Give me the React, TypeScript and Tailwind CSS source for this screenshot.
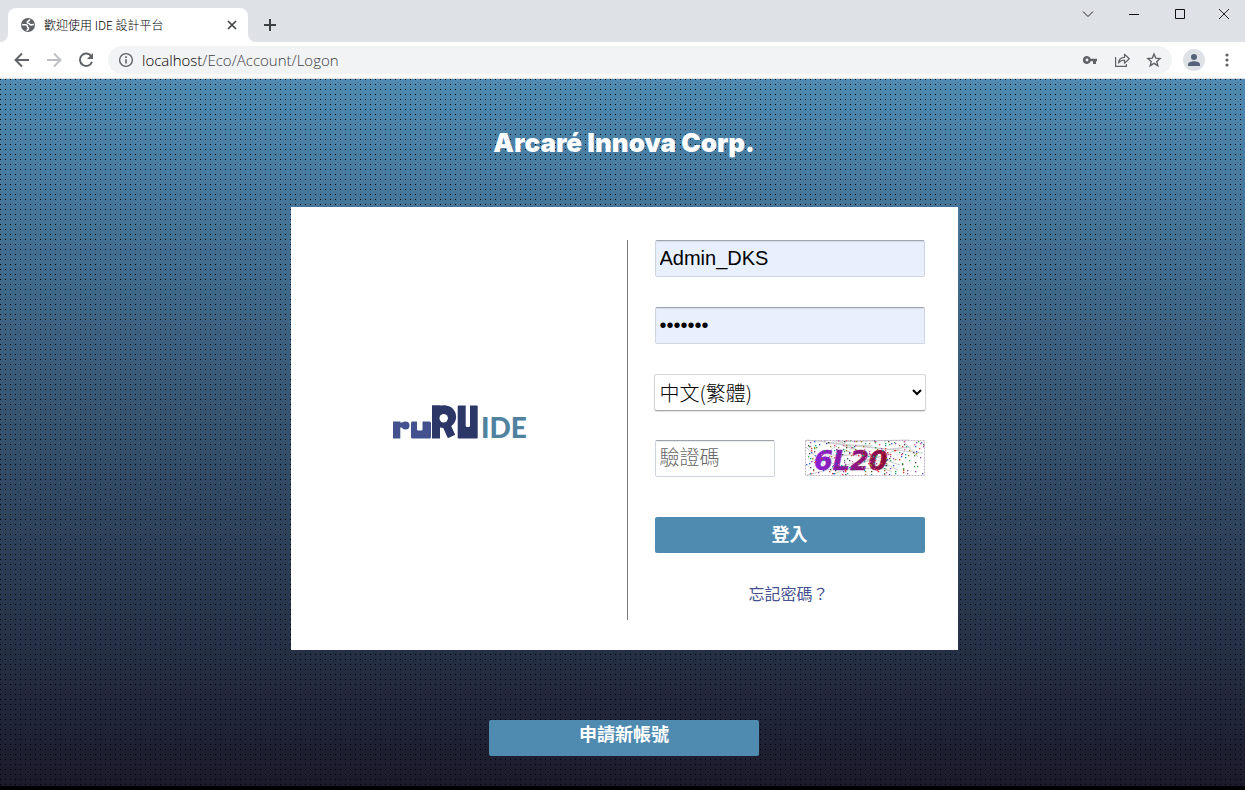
import React from "react";

const FONT = 'font-["Liberation_Sans","Noto_Sans_CJK_TC",sans-serif]';

function IconButton({ label, children, className = "" }: { label: string; children: React.ReactNode; className?: string }) {
  return (
    <button type="button" aria-label={label} className={`flex items-center justify-center ${className}`}>
      {children}
    </button>
  );
}

function TitleBar() {
  return (
    <div className="flex h-[42px] items-end bg-[#dee1e6]">
      <div className="h-2 w-2 bg-white">
        <div className="h-2 w-2 rounded-br-lg bg-[#dee1e6]" />
      </div>
      <div className="flex h-[34px] w-60 items-center rounded-t-lg bg-white pr-2 pl-3">
        <svg width="16" height="16" viewBox="0 0 16 16" aria-hidden="true">
          <circle cx="8" cy="8" r="7" fill="#5f6368" />
          <path d="M9.800 2.400C9.600 4 8.200 3.900 7.400 4.700c-.6.8.3 1.500 1.100 1.600 1.200.1 1 1.500 2.200 1.600 1 .1 1.500-.6 3.300-.3" fill="none" stroke="#fff" strokeWidth="1.600" />
          <path d="M2 7.800h3.600c1.600 0 1.900 1 1.800 1.900-.1.900 1.200.6 1.100 1.700-.1 1-1.300.9-1.500 2.500" fill="none" stroke="#fff" strokeWidth="1.600" />
        </svg>
        <span className='ml-2 flex-1 font-["Noto_Sans_CJK_TC",sans-serif] text-xs font-light text-black'>歡迎使用 IDE 設計平台</span>
        <IconButton label="關閉分頁" className="h-4 w-4">
          <svg width="10" height="10" viewBox="0 0 10 10" stroke="#3c4043" strokeWidth="1.600"><path d="M1 1l8 8M9 1l-8 8" /></svg>
        </IconButton>
      </div>
      <div className="h-2 w-2 bg-white">
        <div className="h-2 w-2 rounded-bl-lg bg-[#dee1e6]" />
      </div>
      <IconButton label="新分頁" className="h-[34px] w-7">
        <svg width="12" height="12" viewBox="0 0 12 12" stroke="#3c4043" strokeWidth="2"><path d="M6 0v12M0 6h12" /></svg>
      </IconButton>
      <div className="ml-auto flex h-full items-start">
        <IconButton label="搜尋分頁" className="h-7 w-[46px]">
          <svg width="12" height="8" viewBox="0 0 12 8" fill="none" stroke="#222"><path d="M1 1.500l5 5 5-5" /></svg>
        </IconButton>
        <IconButton label="最小化" className="h-7 w-[46px]">
          <svg width="10" height="10" viewBox="0 0 10 10" stroke="#111"><path d="M0 5.500h10" /></svg>
        </IconButton>
        <IconButton label="最大化" className="h-7 w-[46px]">
          <svg width="10" height="10" viewBox="0 0 10 10" fill="none" stroke="#111"><path d="M.5.5h9v9h-9z" /></svg>
        </IconButton>
        <IconButton label="關閉" className="h-7 w-[42px]">
          <svg width="10" height="10" viewBox="0 0 10 10" stroke="#222"><path d="M0 0l10 10M10 0L0 10" /></svg>
        </IconButton>
      </div>
    </div>
  );
}

function Toolbar() {
  return (
    <div className="flex h-[37px] items-center border-b border-[#dadce0] bg-white pr-[6px] pl-2">
      <IconButton label="上一頁" className="h-7 w-7">
        <svg width="16" height="16" viewBox="0 0 16 16" fill="none" stroke="#5f6368" strokeWidth="1.900"><path d="M15 8H2M8 1.500L1.500 8 8 14.500" /></svg>
      </IconButton>
      <IconButton label="下一頁" className="ml-1 h-7 w-7">
        <svg width="16" height="16" viewBox="0 0 16 16" fill="none" stroke="#bcbec1" strokeWidth="1.900"><path d="M1 8h13M8 1.500L14.500 8 8 14.500" /></svg>
      </IconButton>
      <IconButton label="重新載入" className="ml-1 h-7 w-7">
        <svg width="16" height="16" viewBox="0 0 16 16"><path d="M13.400 4.500A6.200 6.200 0 1 0 14 9.700" fill="none" stroke="#5f6368" strokeWidth="2" /><path d="M15 1v6H9z" fill="#5f6368" /></svg>
      </IconButton>
      <div className="ml-2 flex h-7 flex-1 items-center rounded-full bg-[#f1f3f4] pr-[10px] pl-[10px]">
        <svg width="16" height="16" viewBox="0 0 16 16" aria-hidden="true"><circle cx="8" cy="8" r="6.400" fill="none" stroke="#5f6368" strokeWidth="1.400" /><path d="M7.200 7.200h1.600v4.300H7.200zM7.200 4.300h1.600v1.600H7.200z" fill="#5f6368" /></svg>
        <span className='ml-2 flex-1 font-["Open_Sans",sans-serif] text-[15px] leading-5 font-light text-[#3c4043]'><span className="text-black">localhost</span>/Eco/Account/Logon</span>
        <IconButton label="密碼" className="h-4 w-4">
          <svg width="16" height="16" viewBox="0 0 16 16"><path fillRule="evenodd" d="M5 4a4 4 0 1 0 3.700 5.300H11V12h3V9.300h1V6.700H8.700A4 4 0 0 0 5 4zm0 2.600a1.400 1.400 0 1 1 0 2.800 1.400 1.400 0 0 1 0-2.800z" fill="#5f6368" /></svg>
        </IconButton>
        <IconButton label="分享" className="ml-4 h-4 w-4">
          <svg width="16" height="16" viewBox="0 0 16 16" fill="none" stroke="#5f6368" strokeWidth="1.200"><path d="M1.600 5v9.400h10.800V12" /><path d="M4.500 11c.4-3.700 2.500-5.500 6-5.600V2.300L15.300 6.800l-4.800 4.400V8C7.800 8 6 9 4.500 11z" strokeLinejoin="round" /></svg>
        </IconButton>
        <IconButton label="加入書籤" className="ml-4 h-4 w-4">
          <svg width="16" height="16" viewBox="0 0 16 16" fill="none" stroke="#5f6368" strokeWidth="1.400"><path d="M8 2l1.700 4.100 4.400.4-3.300 2.900 1 4.300L8 11.400l-3.800 2.300 1-4.300L1.900 6.500l4.400-.4z" /></svg>
        </IconButton>
      </div>
      <IconButton label="使用者" className="ml-[11px] h-[22px] w-[22px] rounded-full bg-[#dee1e6]">
        <svg width="12" height="12" viewBox="0 0 12 12" fill="#56617a"><circle cx="6" cy="3" r="3" /><path d="M0 12v-1.500C0 8.200 3.500 7.300 6 7.300s6 .9 6 3.200V12z" /></svg>
      </IconButton>
      <IconButton label="選單" className="ml-[10px] h-7 w-6">
        <svg width="4" height="14" viewBox="0 0 4 14" fill="#5f6368"><circle cx="2" cy="2" r="1.600" /><circle cx="2" cy="7" r="1.600" /><circle cx="2" cy="12" r="1.600" /></svg>
      </IconButton>
    </div>
  );
}

function Logo() {
  return (
    <svg width="140" height="44" viewBox="0 -4 140 44" role="img" aria-label="ruRU IDE" className="overflow-visible">
      <g fill="#43528f">
        <rect x="0" y="17.500" width="7.300" height="17" />
        <rect x="6" y="18.500" width="6" height="5" />
        <circle cx="12.500" cy="21.500" r="4" />
        <rect x="18" y="17.500" width="20" height="17" rx="1.500" />
      </g>
      <rect x="24" y="15" width="5.500" height="11.500" rx="1" fill="#fff" />
      <g fill="#2d3767">
        <rect x="39" y="1.500" width="14" height="22" />
        <rect x="39" y="1.500" width="8" height="33" />
        <circle cx="51.800" cy="12.800" r="11.300" />
        <rect x="64.700" y="1.500" width="20" height="33" rx="1" />
      </g>
      <line x1="52" y1="18" x2="58.500" y2="32.500" stroke="#2d3767" strokeWidth="8" />
      <circle cx="50.700" cy="14.300" r="4.200" fill="#fff" />
      <rect x="72.700" y="0" width="4.300" height="23" rx="1.500" fill="#fff" />
      <text x="88" y="34" fill="#4f829f" className='font-["Lato",sans-serif] text-[28px] font-black'>IDE</text>
    </svg>
  );
}

const NOISE_COLORS = ["#e23b3b", "#2ca84a", "#3454d1", "#8b3fb5", "#444444", "#d94fa0", "#1aa5a5", "#a08020"];

function Captcha() {
  let seed = 4711;
  const next = (max: number) => {
    seed = (seed * 9301 + 49297) % 233280;
    return Math.floor((seed / 233280) * max);
  };
  const dots = Array.from({ length: 240 }, () => ({ x: next(119), y: next(35), c: NOISE_COLORS[next(8)] }));
  const lines = Array.from({ length: 17 }, () => [next(120), next(36), next(120), next(36)]);
  return (
    <svg width="120" height="36" viewBox="0 0 120 36" role="img" aria-label="驗證碼圖片 6L20" className="shrink-0 overflow-visible">
      <defs>
        <linearGradient id="ink" x1="0" x2="1">
          <stop offset="0" stopColor="#8a22d8" />
          <stop offset="0.5" stopColor="#8c178f" />
          <stop offset="1" stopColor="#8c0a30" />
        </linearGradient>
      </defs>
      <rect width="120" height="36" fill="#fff" />
      {lines.map((l, i) => (
        <line key={i} x1={l[0]} y1={l[1]} x2={l[2]} y2={l[3]} stroke="#cccccc" />
      ))}
      <text x="9" y="30" fill="url(#ink)" stroke="url(#ink)" strokeWidth="0.6" className='font-["DejaVu_Sans",sans-serif] text-[27px] leading-8 font-bold italic'>6L20</text>
      {dots.map((d, i) => (
        <rect key={i} x={d.x} y={d.y} width="1.300" height="1.300" fill={d.c} />
      ))}
      <rect x="0.5" y="0.5" width="119" height="35" fill="none" stroke="#c0b4c4" strokeDasharray="2 1" />
    </svg>
  );
}

const FIELD =
  "h-[37px] min-w-0 rounded-xs border border-[#d0d5de] border-t-[#9fa3ac] px-1 text-xl leading-6 text-black shadow-[inset_0_1px_1px_rgba(0,0,0,0.08)] outline-none";

const ACTION = "h-9 w-[270px] rounded-xs bg-[#4f8bb1] text-lg leading-6 font-bold text-white";

function LoginForm() {
  return (
    <form className="ml-[27px] flex min-w-0 flex-1 flex-col" onSubmit={(e) => e.preventDefault()}>
      <input aria-label="帳號" defaultValue="Admin_DKS" className={`${FIELD} bg-[#e8f0fe]`} />
      <input aria-label="密碼" type="password" defaultValue="ruruide" className={`${FIELD} mt-[30px] bg-[#e8f0fe]`} />
      <select
        aria-label="語言"
        className='mt-[30px] -mx-px h-[37px] rounded-[3px] border border-[#d6d6d6] border-b-[#a8a8a8] bg-white px-px font-["Noto_Sans_CJK_TC",sans-serif] text-xl font-light text-black shadow-[0_1px_1px_rgba(0,0,0,0.12)]'
      >
        <option>中文(繁體)</option>
      </select>
      <div className="mt-[29px] flex items-start justify-between">
        <input
          aria-label="驗證碼"
          placeholder="驗證碼"
          className={`${FIELD} w-[120px] bg-white font-light placeholder:font-["Noto_Sans_CJK_TC",sans-serif] placeholder:text-[#666]`}
        />
        <Captcha />
      </div>
      <button type="submit" className={`${ACTION} mt-10`}>登入</button>
      <a href="#forgot" className="mt-[30px] ml-[94px] self-start text-base leading-6 text-[#46528f]">忘記密碼？</a>
    </form>
  );
}

export default function App() {
  return (
    <div className={`flex min-h-screen flex-col ${FONT}`}>
      <header>
        <TitleBar />
        <Toolbar />
      </header>
      <main className="flex flex-1 flex-col items-center border-b-4 border-black bg-[conic-gradient(at_1px_1px,transparent_75%,#000_0),linear-gradient(#4e8ab1,#1b1a2b)] bg-[length:5px_5px,100%_100%] pb-[30px] pl-[3px]">
        <h1 className='mt-12 font-["Inter",sans-serif] text-[26px] leading-8 font-black text-white'>Arcaré Innova Corp.</h1>
        <section className="mt-12 flex min-h-[443px] w-[667px] max-w-full bg-white pt-[33px] pr-[33px] pb-[30px]">
          <div className="flex w-[337px] shrink-0 items-center justify-center border-r border-[#777] pb-4 pl-2">
            <Logo />
          </div>
          <LoginForm />
        </section>
        <button type="button" className={`${ACTION} mt-[70px] pb-[6px]`}>申請新帳號</button>
      </main>
    </div>
  );
}
